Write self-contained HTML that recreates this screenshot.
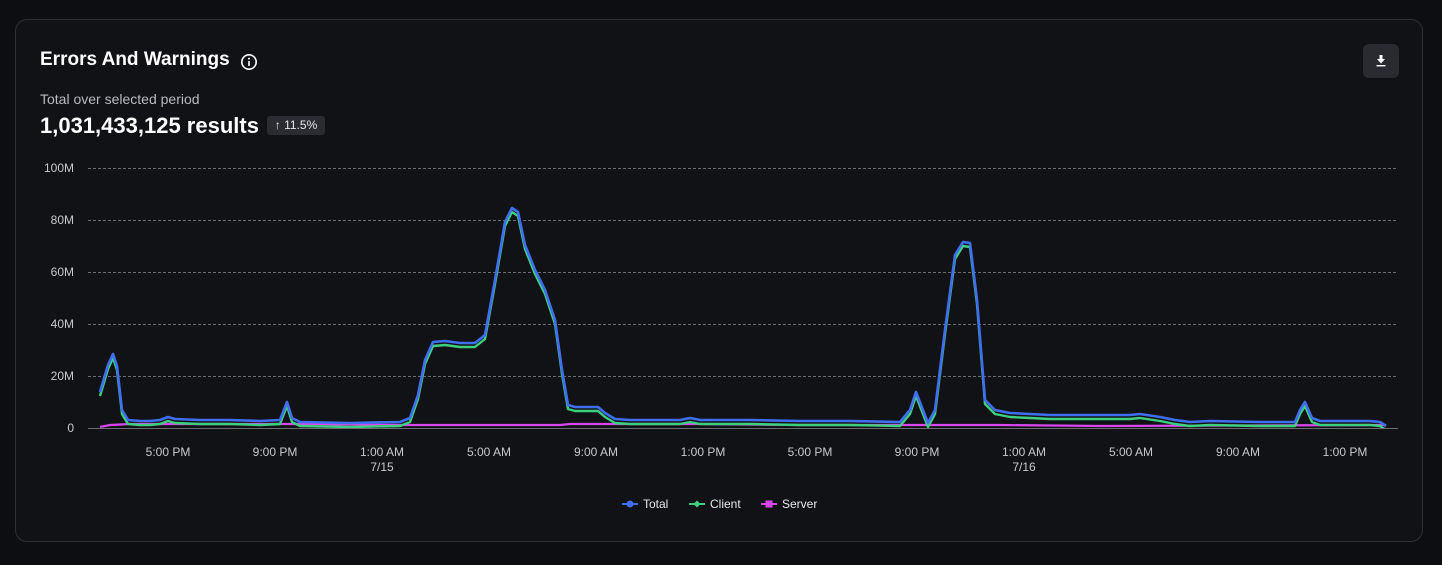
<!DOCTYPE html>
<html><head><style>
html,body{margin:0;width:1442px;height:565px;background:#0d0e11;overflow:hidden;font-family:"Liberation Sans",sans-serif;}
.card{position:absolute;left:15px;top:19px;width:1406px;height:521px;border:1px solid #2e3036;border-radius:12px;background:#111216;}
.t{position:absolute;left:40px;top:49px;color:#fff;font-weight:bold;font-size:19px;}
.s{position:absolute;left:40px;top:91px;color:#b8bac0;font-size:14px;}
.n{position:absolute;left:40px;top:113px;color:#fff;font-weight:bold;font-size:22px;}
.b{position:absolute;left:267px;top:116px;width:58px;height:19px;background:#2a2c31;border-radius:3px;color:#e8e8ea;font-size:12px;line-height:19px;text-align:center;}
.dl{position:absolute;left:1363px;top:44px;width:36px;height:34px;background:#2a2b30;border-radius:6px;}
</style></head><body>
<div class="card"></div>
<div class="t">Errors And Warnings</div>
<svg style="position:absolute;left:240px;top:53px" width="18" height="18" viewBox="0 0 18 18"><circle cx="9" cy="9" r="7.2" fill="none" stroke="#fff" stroke-width="1.6"/><rect x="8.2" y="8" width="1.6" height="5" fill="#fff"/><circle cx="9" cy="5.6" r="1" fill="#fff"/></svg>
<div class="s">Total over selected period</div>
<div class="n">1,031,433,125 results</div>
<div class="b">↑ 11.5%</div>
<div class="dl"><svg width="36" height="34" viewBox="0 0 36 34"><path d="M16.5 11h3v4h2.5L18 19.5 14 15h2.5z" fill="#fff"/><rect x="13.5" y="21" width="9" height="1.4" fill="#fff"/></svg></div>
<svg style="position:absolute;left:0;top:0" width="1442" height="565">
<g font-size="12" fill="#c8c9cd" text-anchor="end">
<text x="74" y="172">100M</text><text x="74" y="224">80M</text><text x="74" y="276">60M</text><text x="74" y="328">40M</text><text x="74" y="380">20M</text><text x="74" y="432">0</text>
</g>
<g stroke="#6a6c72" stroke-dasharray="3 2" stroke-width="1">
<line x1="88" y1="168.5" x2="1398" y2="168.5"/><line x1="88" y1="220.5" x2="1398" y2="220.5"/><line x1="88" y1="272.5" x2="1398" y2="272.5"/><line x1="88" y1="324.5" x2="1398" y2="324.5"/><line x1="88" y1="376.5" x2="1398" y2="376.5"/>
</g>
<line x1="88" y1="428.5" x2="1398" y2="428.5" stroke="#6a6c72"/>
<g font-size="12" fill="#c8c9cd" text-anchor="middle">
<text x="168" y="456">5:00 PM</text><text x="275" y="456">9:00 PM</text><text x="382" y="456">1:00 AM</text><text x="382" y="471">7/15</text><text x="489" y="456">5:00 AM</text><text x="596" y="456">9:00 AM</text><text x="703" y="456">1:00 PM</text><text x="810" y="456">5:00 PM</text><text x="917" y="456">9:00 PM</text><text x="1024" y="456">1:00 AM</text><text x="1024" y="471">7/16</text><text x="1131" y="456">5:00 AM</text><text x="1238" y="456">9:00 AM</text><text x="1345" y="456">1:00 PM</text>
</g>
<polyline fill="none" stroke="#d946ef" stroke-width="2.2" points="100,427 110,425 130,424 300,424 400,425 560,425 570,424 700,424 800,425 1000,425 1100,426 1386,425"/>
<defs><clipPath id="c"><rect x="0" y="0" width="1442" height="428"/></clipPath>
<polyline id="p" points="100,392 108,365 113,354 117,366 122,410 128,420 140,421 150,421 160,420 168,417 175,419 200,420 230,420 260,421 280,420 287,402 292,418 300,422 350,423 400,422 410,418 418,395 425,360 433,342 445,341 460,343 475,343 485,335 495,280 505,222 512,208 518,212 525,245 535,270 545,290 555,320 562,370 568,405 575,407 590,407 598,407 605,413 615,419 630,420 680,420 690,418 700,420 750,420 800,421 850,421 900,422 910,410 916,392 921,405 928,423 935,410 945,330 955,255 963,242 970,243 977,300 985,400 995,410 1010,413 1030,414 1050,415 1130,415 1140,414 1160,417 1175,420 1190,422 1210,421 1260,422 1295,422 1300,410 1305,402 1312,418 1320,421 1370,421 1380,422 1386,426"/></defs>
<g clip-path="url(#c)"><use href="#p" transform="translate(0,4)" fill="none" stroke="#3ecf7e" stroke-width="2.4" stroke-linejoin="round"/></g>
<use href="#p" fill="none" stroke="#3f6ef0" stroke-width="2.6" stroke-linejoin="round"/>
<g font-size="12" fill="#e8e8ea">
<line x1="622" y1="504" x2="638" y2="504" stroke="#3f6ef0" stroke-width="2"/><circle cx="630" cy="504" r="3.5" fill="#3f6ef0"/><text x="643" y="508">Total</text>
<line x1="689" y1="504" x2="705" y2="504" stroke="#3ecf7e" stroke-width="2"/><path d="M697 500.5l3.5 3.5-3.5 3.5-3.5-3.5z" fill="#3ecf7e"/><text x="710" y="508">Client</text>
<line x1="761" y1="504" x2="777" y2="504" stroke="#d946ef" stroke-width="2"/><rect x="765.5" y="500.5" width="7" height="7" fill="#d946ef"/><text x="782" y="508">Server</text>
</g>
</svg>
</body></html>
